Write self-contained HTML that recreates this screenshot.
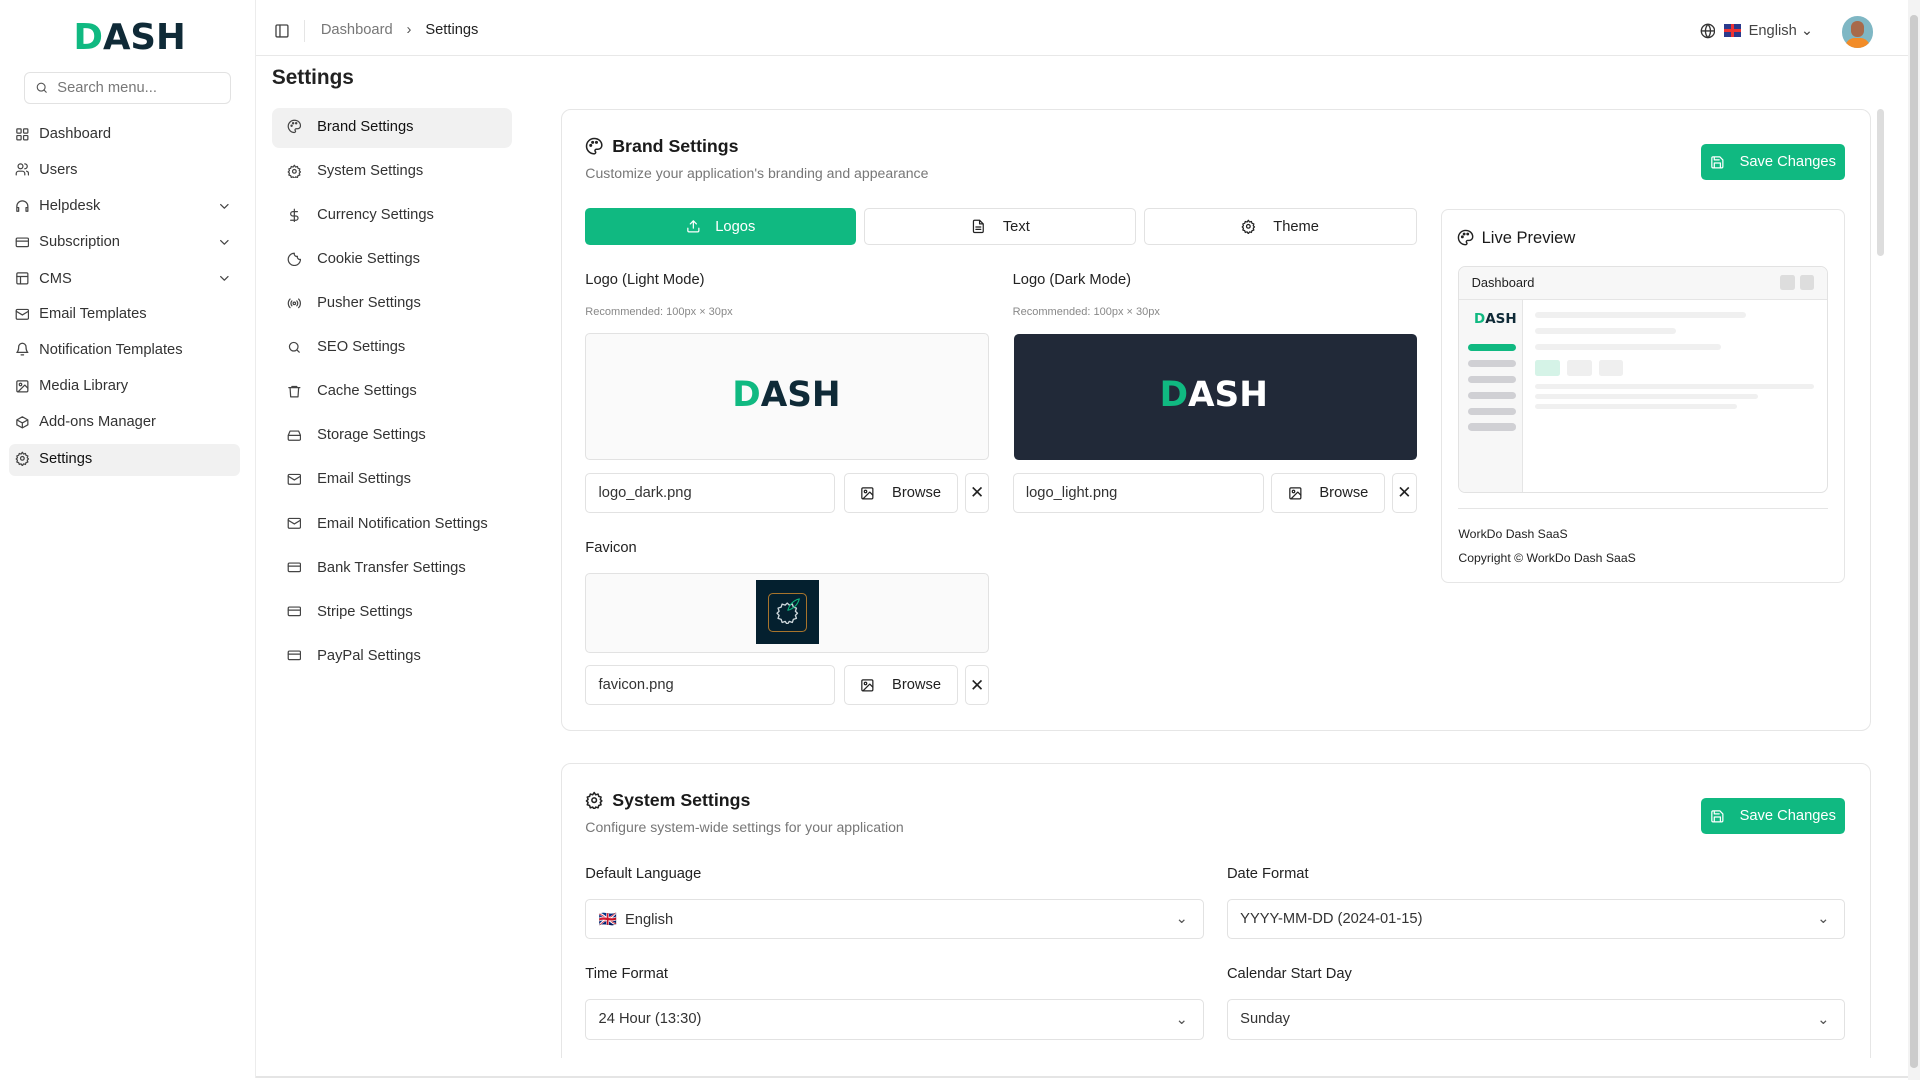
<!DOCTYPE html>
<html><head><meta charset="utf-8"><style>
*{box-sizing:border-box;margin:0;padding:0}
html,body{width:1920px;height:1080px;overflow:hidden;background:#fff}
#root{zoom:1.22449;width:1568px;height:882px;position:relative;font-family:"Liberation Sans",sans-serif;color:#1f2328;font-size:12px}
.a{position:absolute}
svg{fill:none;stroke:currentColor;stroke-width:2;stroke-linecap:round;stroke-linejoin:round}
.side{left:0;top:0;width:209px;height:880px;border-right:1px solid #ececec}
.logo{font-weight:bold;font-size:29px;letter-spacing:0px;color:#0f2a37;font-family:"DejaVu Sans","Liberation Sans",sans-serif}
.logo b{color:#10b981}
.nav{left:12px;font-size:12px;color:#333;display:flex;align-items:center;gap:8px}
.nav svg{width:12px;height:12px;color:#444}
.chev{position:absolute;left:165px;width:10px;height:10px}
.sn{left:234px;display:flex;align-items:center;gap:13px;font-size:12px;color:#333}
.sn svg{width:12px;height:12px;color:#444}
.card{border:1px solid #e6e6e6;border-radius:8px;background:#fff}
.btn{background:#10b981;color:#fff;border-radius:4px;display:flex;align-items:center;justify-content:center;gap:12px;font-size:12px}
.btn svg{width:12px;height:12px}
.box{border:1px solid #e2e2e2;border-radius:4px;background:#fff}
.inp{display:flex;align-items:center;padding-left:10px;font-size:12px;color:#333}
.bb{display:flex;align-items:center;justify-content:center;gap:14px;font-size:12px;color:#222}
.bb svg{width:12px;height:12px}
.lbl{font-size:12px;color:#222}
.sm{font-size:9px;color:#888}
.bar{position:absolute;height:6px;border-radius:3px}
</style></head><body><div id="root">
<div class="a side"></div>
<div class="a logo" style="left:60px;top:14px"><b>D</b>ASH</div>
<div class="a box" style="left:20px;top:59px;width:169px;height:26px;border-radius:5px;display:flex;align-items:center;padding-left:8px;gap:7px;color:#777;font-size:12px"><svg style="width:11px;height:11px;color:#555" viewBox="0 0 24 24"><circle cx="11" cy="11" r="7"/><path d="M20 20l-4-4"/></svg>Search menu...</div>

<div class="a nav" style="top:103px"><svg viewBox="0 0 24 24"><rect x="3" y="3" width="7" height="7" rx="1"/><rect x="14" y="3" width="7" height="7" rx="1"/><rect x="3" y="14" width="7" height="7" rx="1"/><rect x="14" y="14" width="7" height="7" rx="1"/></svg>Dashboard</div>
<div class="a nav" style="top:132px"><svg viewBox="0 0 24 24"><circle cx="9" cy="7" r="4"/><path d="M2 21v-2a4 4 0 014-4h6a4 4 0 014 4v2M16 3a4 4 0 010 8M22 21v-2a4 4 0 00-3-4"/></svg>Users</div>
<div class="a nav" style="top:162px;width:190px"><svg viewBox="0 0 24 24"><path d="M3 14v-2a9 9 0 0118 0v2M3 14h3v6H3zM18 14h3v6h-3z"/></svg>Helpdesk<svg class="chev" viewBox="0 0 24 24"><path d="M6 9l6 6 6-6"/></svg></div>
<div class="a nav" style="top:191px;width:190px"><svg viewBox="0 0 24 24"><rect x="2" y="5" width="20" height="14" rx="2"/><path d="M2 10h20"/></svg>Subscription<svg class="chev" viewBox="0 0 24 24"><path d="M6 9l6 6 6-6"/></svg></div>
<div class="a nav" style="top:221px;width:190px"><svg viewBox="0 0 24 24"><rect x="3" y="3" width="18" height="18" rx="2"/><path d="M3 9h18M9 21V9"/></svg>CMS<svg class="chev" viewBox="0 0 24 24"><path d="M6 9l6 6 6-6"/></svg></div>
<div class="a nav" style="top:250px"><svg viewBox="0 0 24 24"><rect x="2" y="4" width="20" height="16" rx="2"/><path d="M22 7l-10 6L2 7"/></svg>Email Templates</div>
<div class="a nav" style="top:279px"><svg viewBox="0 0 24 24"><path d="M6 8a6 6 0 0112 0c0 7 3 9 3 9H3s3-2 3-9M10 21h4"/></svg>Notification Templates</div>
<div class="a nav" style="top:309px"><svg viewBox="0 0 24 24"><rect x="3" y="3" width="18" height="18" rx="2"/><circle cx="9" cy="9" r="2"/><path d="M21 15l-5-5L5 21"/></svg>Media Library</div>
<div class="a nav" style="top:338px"><svg viewBox="0 0 24 24"><path d="M21 8l-9-5-9 5v8l9 5 9-5zM3 8l9 5 9-5M12 13v8"/></svg>Add-ons Manager</div>
<div class="a" style="left:7px;top:363px;width:189px;height:26px;background:#f1f1f1;border-radius:5px"></div>
<div class="a nav" style="top:368px;color:#111"><svg viewBox="0 0 24 24"><circle cx="12" cy="12" r="3"/><path d="M12 2l2 3 3-1 1 3 3 1-1 3 2 2-2 2 1 3-3 1-1 3-3-1-2 3-2-3-3 1-1-3-3-1 1-3-2-2 2-2-1-3 3-1 1-3 3 1z"/></svg>Settings</div>

<div class="a" style="left:209px;top:45px;width:1349px;height:1px;background:#e8e8e8"></div>
<svg class="a" style="left:224px;top:19px;width:13px;height:13px;color:#444" viewBox="0 0 24 24"><rect x="3" y="3" width="18" height="18" rx="2"/><path d="M9 3v18"/></svg>
<div class="a" style="left:248px;top:16px;width:1px;height:18px;background:#e5e5e5"></div>
<div class="a" style="left:262px;top:18px;font-size:12px;color:#777">Dashboard <span style="margin:0 8px;color:#555">›</span> <span style="color:#222">Settings</span></div>
<svg class="a" style="left:1388px;top:19px;width:13px;height:13px;color:#333" viewBox="0 0 24 24"><circle cx="12" cy="12" r="10"/><path d="M2 12h20M12 2a15 15 0 010 20M12 2a15 15 0 000 20"/></svg>
<div class="a" style="left:1408px;top:20px;width:14px;height:10px;background:#2b3a8c;overflow:hidden"><div style="position:absolute;left:0;top:4px;width:14px;height:2px;background:#e33"></div><div style="position:absolute;left:6px;top:0;width:2px;height:10px;background:#e33"></div></div>
<div class="a" style="left:1428px;top:18px;font-size:12px;color:#444">English ⌄</div>
<div class="a" style="left:1504px;top:13px;width:26px;height:26px;border-radius:50%;background:#7fb7c4;overflow:hidden"><div style="position:absolute;left:8px;top:4px;width:10px;height:13px;border-radius:5px;background:#a86a4a"></div><div style="position:absolute;left:3px;top:18px;width:20px;height:10px;border-radius:8px 8px 0 0;background:#f28c28"></div></div>

<div class="a" style="left:222px;top:54px;font-size:17px;font-weight:bold;color:#222">Settings</div>

<div class="a" style="left:222px;top:88px;width:196px;height:33px;background:#f1f1f1;border-radius:6px"></div>
<div class="a sn" style="top:97px;color:#111"><svg viewBox="0 0 24 24"><path d="M12 2a10 10 0 000 20c1 0 2-1 2-2s-1-1-1-2 1-2 2-2h2a5 5 0 005-5c0-5-4-9-10-9z"/><circle cx="7.5" cy="11" r="1"/><circle cx="10" cy="7" r="1"/><circle cx="15" cy="7" r="1"/></svg>Brand Settings</div>
<div class="a sn" style="top:133px"><svg viewBox="0 0 24 24"><circle cx="12" cy="12" r="3"/><path d="M12 2l2 3 3-1 1 3 3 1-1 3 2 2-2 2 1 3-3 1-1 3-3-1-2 3-2-3-3 1-1-3-3-1 1-3-2-2 2-2-1-3 3-1 1-3 3 1z"/></svg>System Settings</div>
<div class="a sn" style="top:169px"><svg viewBox="0 0 24 24"><path d="M12 2v20M17 6H9.5a3.5 3.5 0 000 7h5a3.5 3.5 0 010 7H6"/></svg>Currency Settings</div>
<div class="a sn" style="top:205px"><svg viewBox="0 0 24 24"><path d="M12 2a10 10 0 1010 10 4 4 0 01-5-5 4 4 0 01-5-5z"/></svg>Cookie Settings</div>
<div class="a sn" style="top:241px"><svg viewBox="0 0 24 24"><circle cx="12" cy="12" r="2"/><path d="M8 8a6 6 0 000 8M16 8a6 6 0 010 8M5 5a10 10 0 000 14M19 5a10 10 0 010 14"/></svg>Pusher Settings</div>
<div class="a sn" style="top:277px"><svg viewBox="0 0 24 24"><circle cx="11" cy="11" r="7"/><path d="M20 20l-4-4"/></svg>SEO Settings</div>
<div class="a sn" style="top:313px"><svg viewBox="0 0 24 24"><path d="M3 6h18M8 6V4h8v2M5 6l1 15h12l1-15"/></svg>Cache Settings</div>
<div class="a sn" style="top:349px"><svg viewBox="0 0 24 24"><path d="M22 12H2M5 5h14l3 7v6a2 2 0 01-2 2H4a2 2 0 01-2-2v-6z"/></svg>Storage Settings</div>
<div class="a sn" style="top:385px"><svg viewBox="0 0 24 24"><rect x="2" y="4" width="20" height="16" rx="2"/><path d="M22 7l-10 6L2 7"/></svg>Email Settings</div>
<div class="a sn" style="top:421px"><svg viewBox="0 0 24 24"><rect x="2" y="4" width="20" height="16" rx="2"/><path d="M22 7l-10 6L2 7"/></svg>Email Notification Settings</div>
<div class="a sn" style="top:457px"><svg viewBox="0 0 24 24"><rect x="2" y="5" width="20" height="14" rx="2"/><path d="M2 10h20"/></svg>Bank Transfer Settings</div>
<div class="a sn" style="top:493px"><svg viewBox="0 0 24 24"><rect x="2" y="5" width="20" height="14" rx="2"/><path d="M2 10h20"/></svg>Stripe Settings</div>
<div class="a sn" style="top:529px"><svg viewBox="0 0 24 24"><rect x="2" y="5" width="20" height="14" rx="2"/><path d="M2 10h20"/></svg>PayPal Settings</div>

<div class="a card" style="left:458px;top:89px;width:1070px;height:508px"></div>
<svg class="a" style="left:478px;top:112px;width:15px;height:15px;color:#222" viewBox="0 0 24 24"><path d="M12 2a10 10 0 000 20c1 0 2-1 2-2s-1-1-1-2 1-2 2-2h2a5 5 0 005-5c0-5-4-9-10-9z"/><circle cx="7.5" cy="11" r="1"/><circle cx="10" cy="7" r="1"/><circle cx="15" cy="7" r="1"/></svg>
<div class="a" style="left:500px;top:111px;font-size:14.5px;font-weight:600;color:#1a1a1a">Brand Settings</div>
<div class="a" style="left:478px;top:135px;font-size:11.5px;color:#777">Customize your application's branding and appearance</div>
<div class="a btn" style="left:1389px;top:118px;width:118px;height:29px"><svg viewBox="0 0 24 24"><path d="M19 21H5a2 2 0 01-2-2V5a2 2 0 012-2h11l5 5v11a2 2 0 01-2 2zM17 21v-8H7v8M7 3v5h8"/></svg>Save Changes</div>

<div class="a btn" style="left:478px;top:170px;width:221px;height:30px"><svg viewBox="0 0 24 24"><path d="M21 15v4a2 2 0 01-2 2H5a2 2 0 01-2-2v-4M17 8l-5-5-5 5M12 3v12"/></svg>Logos</div>
<div class="a box bb" style="left:706px;top:170px;width:222px;height:30px"><svg viewBox="0 0 24 24"><path d="M14 2H6a2 2 0 00-2 2v16a2 2 0 002 2h12a2 2 0 002-2V8zM14 2v6h6M8 13h8M8 17h8"/></svg>Text</div>
<div class="a box bb" style="left:934px;top:170px;width:223px;height:30px"><svg viewBox="0 0 24 24"><circle cx="12" cy="12" r="3"/><path d="M12 2l2 3 3-1 1 3 3 1-1 3 2 2-2 2 1 3-3 1-1 3-3-1-2 3-2-3-3 1-1-3-3-1 1-3-2-2 2-2-1-3 3-1 1-3 3 1z"/></svg>Theme</div>

<div class="a lbl" style="left:478px;top:222px">Logo (Light Mode)</div>
<div class="a sm" style="left:478px;top:250px">Recommended: 100px × 30px</div>
<div class="a box" style="left:478px;top:272px;width:330px;height:104px;background:#fafafa"></div>
<div class="a logo" style="left:598px;top:306px;font-size:28px"><b>D</b>ASH</div>
<div class="a box inp" style="left:478px;top:386px;width:204px;height:33px">logo_dark.png</div>
<div class="a box bb" style="left:689px;top:386px;width:93px;height:33px"><svg viewBox="0 0 24 24"><rect x="3" y="3" width="18" height="18" rx="2"/><circle cx="9" cy="9" r="2"/><path d="M21 15l-5-5L5 21"/></svg>Browse</div>
<div class="a box bb" style="left:788px;top:386px;width:20px;height:33px;font-size:14px">✕</div>

<div class="a lbl" style="left:827px;top:222px">Logo (Dark Mode)</div>
<div class="a sm" style="left:827px;top:250px">Recommended: 100px × 30px</div>
<div class="a" style="left:828px;top:273px;width:329px;height:103px;background:#212938;border-radius:4px"></div>
<div class="a logo" style="left:947px;top:306px;font-size:28px;color:#fff"><b>D</b>ASH</div>
<div class="a box inp" style="left:827px;top:386px;width:205px;height:33px">logo_light.png</div>
<div class="a box bb" style="left:1038px;top:386px;width:93px;height:33px"><svg viewBox="0 0 24 24"><rect x="3" y="3" width="18" height="18" rx="2"/><circle cx="9" cy="9" r="2"/><path d="M21 15l-5-5L5 21"/></svg>Browse</div>
<div class="a box bb" style="left:1137px;top:386px;width:20px;height:33px;font-size:14px">✕</div>

<div class="a lbl" style="left:478px;top:441px">Favicon</div>
<div class="a box" style="left:478px;top:468px;width:330px;height:65px;background:#fafafa"></div>
<div class="a" style="left:617px;top:474px;width:52px;height:52px;background:#04202f"></div>
<div class="a" style="left:627px;top:484px;width:32px;height:32px;border:1px solid #a8742c;border-radius:4px"></div>
<svg class="a" style="left:633px;top:490px;width:20px;height:20px;color:#cfd8dc;stroke-width:1.3" viewBox="0 0 24 24"><path d="M12 3l2 2 3-1 1 3 3 1-1 3 2 2-2 2 1 3-3 1-1 3-3-1-2 3-2-3-3 1-1-3-3-1 1-3-2-2 2-2-1-3 3-1 1-3 3 1z"/></svg>
<svg class="a" style="left:641px;top:487px;width:14px;height:14px;color:#10b981;stroke-width:1.5" viewBox="0 0 24 24"><path d="M4 20c2-8 8-14 16-16-2 8-8 14-16 16z"/></svg>
<div class="a box inp" style="left:478px;top:543px;width:204px;height:33px">favicon.png</div>
<div class="a box bb" style="left:689px;top:543px;width:93px;height:33px"><svg viewBox="0 0 24 24"><rect x="3" y="3" width="18" height="18" rx="2"/><circle cx="9" cy="9" r="2"/><path d="M21 15l-5-5L5 21"/></svg>Browse</div>
<div class="a box bb" style="left:788px;top:543px;width:20px;height:33px;font-size:14px">✕</div>

<div class="a card" style="left:1177px;top:171px;width:330px;height:305px;border-radius:6px"></div>
<svg class="a" style="left:1190px;top:187px;width:14px;height:14px;color:#222" viewBox="0 0 24 24"><path d="M12 2a10 10 0 000 20c1 0 2-1 2-2s-1-1-1-2 1-2 2-2h2a5 5 0 005-5c0-5-4-9-10-9z"/><circle cx="7.5" cy="11" r="1"/><circle cx="10" cy="7" r="1"/><circle cx="15" cy="7" r="1"/></svg>
<div class="a" style="left:1210px;top:186px;font-size:13.5px;color:#1a1a1a">Live Preview</div>
<div class="a" style="left:1191px;top:217px;width:302px;height:186px;border:1px solid #e2e2e2;border-radius:6px;overflow:hidden">
 <div style="position:absolute;left:0;top:0;width:302px;height:27px;background:#f7f7f7;border-bottom:1px solid #e5e5e5"></div>
 <div style="position:absolute;left:10px;top:7px;font-size:10.5px;color:#222">Dashboard</div>
 <div style="position:absolute;left:262px;top:7px;width:12px;height:12px;background:#ddd;border-radius:2px"></div>
 <div style="position:absolute;left:278px;top:7px;width:12px;height:12px;background:#ddd;border-radius:2px"></div>
 <div style="position:absolute;left:0;top:27px;width:52px;height:160px;background:#f7f7f7;border-right:1px solid #e5e5e5"></div>
 <div class="logo" style="position:absolute;left:12px;top:37px;font-size:11px"><b>D</b>ASH</div>
 <div class="bar" style="left:7px;top:63px;width:39px;background:#10b981"></div>
 <div class="bar" style="left:7px;top:76px;width:39px;background:#d0d0d4"></div>
 <div class="bar" style="left:7px;top:89px;width:39px;background:#d0d0d4"></div>
 <div class="bar" style="left:7px;top:102px;width:39px;background:#d0d0d4"></div>
 <div class="bar" style="left:7px;top:115px;width:39px;background:#d0d0d4"></div>
 <div class="bar" style="left:7px;top:128px;width:39px;background:#d0d0d4"></div>
 <div class="bar" style="left:62px;top:37px;width:172px;height:5px;background:#f0f0f0"></div>
 <div class="bar" style="left:62px;top:50px;width:115px;height:5px;background:#f0f0f0"></div>
 <div class="bar" style="left:62px;top:63px;width:152px;height:5px;background:#f0f0f0"></div>
 <div style="position:absolute;left:62px;top:76px;width:20px;height:13px;background:#d5f3e7;border-radius:2px"></div>
 <div style="position:absolute;left:88px;top:76px;width:20px;height:13px;background:#efefef;border-radius:2px"></div>
 <div style="position:absolute;left:114px;top:76px;width:20px;height:13px;background:#efefef;border-radius:2px"></div>
 <div class="bar" style="left:62px;top:96px;width:228px;height:4px;background:#f0f0f0"></div>
 <div class="bar" style="left:62px;top:104px;width:182px;height:4px;background:#f0f0f0"></div>
 <div class="bar" style="left:62px;top:112px;width:165px;height:4px;background:#f0f0f0"></div>
</div>
<div class="a" style="left:1191px;top:415px;width:302px;height:1px;background:#e5e5e5"></div>
<div class="a" style="left:1191px;top:430px;font-size:10px;color:#222">WorkDo Dash SaaS</div>
<div class="a" style="left:1191px;top:450px;font-size:10px;color:#222">Copyright © WorkDo Dash SaaS</div>

<div class="a card" style="left:458px;top:623px;width:1070px;height:260px"></div>
<svg class="a" style="left:478px;top:646px;width:15px;height:15px;color:#222" viewBox="0 0 24 24"><circle cx="12" cy="12" r="3"/><path d="M12 2l2 3 3-1 1 3 3 1-1 3 2 2-2 2 1 3-3 1-1 3-3-1-2 3-2-3-3 1-1-3-3-1 1-3-2-2 2-2-1-3 3-1 1-3 3 1z"/></svg>
<div class="a" style="left:500px;top:645px;font-size:14.5px;font-weight:600;color:#1a1a1a">System Settings</div>
<div class="a" style="left:478px;top:669px;font-size:11.5px;color:#777">Configure system-wide settings for your application</div>
<div class="a btn" style="left:1389px;top:652px;width:118px;height:29px"><svg viewBox="0 0 24 24"><path d="M19 21H5a2 2 0 01-2-2V5a2 2 0 012-2h11l5 5v11a2 2 0 01-2 2zM17 21v-8H7v8M7 3v5h8"/></svg>Save Changes</div>
<div class="a lbl" style="left:478px;top:707px">Default Language</div>
<div class="a lbl" style="left:1002px;top:707px">Date Format</div>
<div class="a box inp" style="left:478px;top:734px;width:505px;height:33px">🇬🇧&nbsp; English<span style="position:absolute;right:12px;color:#555">⌄</span></div>
<div class="a box inp" style="left:1002px;top:734px;width:505px;height:33px">YYYY-MM-DD (2024-01-15)<span style="position:absolute;right:12px;color:#555">⌄</span></div>
<div class="a lbl" style="left:478px;top:789px">Time Format</div>
<div class="a lbl" style="left:1002px;top:789px">Calendar Start Day</div>
<div class="a box inp" style="left:478px;top:816px;width:505px;height:33px">24 Hour (13:30)<span style="position:absolute;right:12px;color:#555">⌄</span></div>
<div class="a box inp" style="left:1002px;top:816px;width:505px;height:33px">Sunday<span style="position:absolute;right:12px;color:#555">⌄</span></div>

<div class="a" style="left:209px;top:864px;width:1349px;height:18px;background:#fff"></div>
<div class="a" style="left:209px;top:879px;width:1349px;height:1px;background:#e5e5e5"></div>
<div class="a" style="left:1533px;top:89px;width:6px;height:120px;background:#ddd;border-radius:3px"></div>
<div class="a" style="left:1558px;top:0;width:10px;height:882px;background:#f3f3f3"></div>
<div class="a" style="left:1560px;top:12px;width:6px;height:860px;background:#ccc;border-radius:3px"></div>
</div></body></html>
